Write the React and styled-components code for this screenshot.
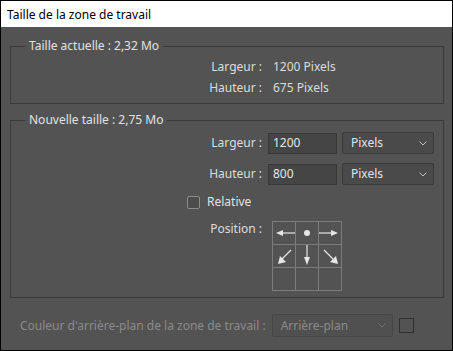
import React from "react";
import styled, { createGlobalStyle } from "styled-components";

const Global = createGlobalStyle`
  html, body { margin: 0; padding: 0; background: #535353; }
  * { box-sizing: border-box; }
`;

const Window = styled.div`
  width: 453px;
  height: 351px;
  border: 1px solid #000;
  background: #535353;
  display: flex;
  flex-direction: column;
  font-family: "Noto Sans", "Open Sans", sans-serif;
  font-size: 12px;
  color: #dadada;
  overflow: hidden;
`;

const TitleBar = styled.div`
  height: 26px;
  flex: none;
  background: #fff;
  color: #000;
  display: flex;
  align-items: center;
  padding-left: 6px;
  font-size: 12px;
`;

const Body = styled.div`
  flex: 1;
  display: flex;
  flex-direction: column;
  padding: 0 8px 0 9px;
`;

const Group = styled.fieldset`
  margin: ${(p) => p.$top}px 0 0;
  padding: 0;
  border: 1px solid #3a3a3a;
  height: ${(p) => p.$h}px;
  min-width: 0;
`;

const Legend = styled.legend`
  margin-left: 14px;
  padding: 0 4px;
  line-height: 16px;
  font-size: 12px;
  color: #e2e2e2;
`;

const InfoGrid = styled.div`
  display: grid;
  grid-template-columns: 251px auto;
  grid-auto-rows: 21px;
  column-gap: 11px;
  align-items: center;
  padding-top: 2px;
`;

const Label = styled.div`
  text-align: right;
  color: ${(p) => (p.$dim ? "#8a8a8a" : "#dcdcdc")};
  line-height: 16px;
  white-space: nowrap;
`;

const Value = styled.div`
  color: #dcdcdc;
  line-height: 16px;
`;

const FormGrid = styled.div`
  display: grid;
  grid-template-columns: 251px auto;
  grid-auto-rows: 22px;
  row-gap: 9px;
  column-gap: 6px;
  align-items: center;
  padding-top: 4px;
`;

const Controls = styled.div`
  display: flex;
  align-items: center;
  gap: 5px;
`;

const Input = styled.div`
  width: 69px;
  height: 21px;
  background: #454545;
  border: 1px solid #383838;
  color: #e6e6e6;
  padding-left: 4px;
  display: flex;
  align-items: center;
  line-height: 16px;
`;

const Select = styled.div`
  width: ${(p) => p.$w}px;
  height: ${(p) => p.$hgt || 22}px;
  margin-left: ${(p) => p.$ml || 0}px;
  background: ${(p) => (p.$disabled ? "#505050" : "#4a4a4a")};
  border: 1px solid ${(p) => (p.$disabled ? "#474747" : "#3a3a3a")};
  border-radius: 2px;
  color: ${(p) => (p.$disabled ? "#8a8a8a" : "#e4e4e4")};
  display: flex;
  align-items: center;
  justify-content: space-between;
  padding: 0 6px 0 8px;
  line-height: 16px;
`;

const Chevron = ({ color }) => (
  <svg width="8" height="5" viewBox="0 0 8 5">
    <path d="M0.5 0.5 L4 4 L7.5 0.5" fill="none" stroke={color} strokeWidth="1" />
  </svg>
);

const CheckRow = styled.div`
  display: flex;
  align-items: center;
  gap: 7px;
  margin: 9px 0 0 176px;
  height: 16px;
`;

const CheckBox = styled.div`
  width: 13px;
  height: 13px;
  border: 1px solid #8c8c8c;
  border-radius: 2px;
  background: #4c4c4c;
`;

const CheckText = styled.span`
  color: #e2e2e2;
  line-height: 16px;
`;

const PositionRow = styled.div`
  display: grid;
  grid-template-columns: 251px auto;
  column-gap: 10px;
  margin-top: 11px;
  align-items: start;
`;

const AnchorGrid = styled.div`
  display: grid;
  grid-template-columns: repeat(3, 22px);
  grid-template-rows: repeat(3, 22px);
  gap: 1px;
  padding: 1px;
  background: #7c7c7c;
  width: 70px;
`;

const Cell = styled.div`
  background: #535353;
  display: flex;
  align-items: center;
  justify-content: center;
`;

const C = "#e6e6e6";

const Arrow = ({ kind }) => {
  const common = { width: 22, height: 22, viewBox: "0 0 22 22" };
  if (kind === "dot")
    return (
      <svg {...common}>
        <circle cx="11" cy="11" r="3" fill={C} />
      </svg>
    );
  if (kind === "left")
    return (
      <svg {...common}>
        <line x1="9" y1="11" x2="22" y2="11" stroke={C} strokeWidth="1.2" />
        <polygon points="3,11 10,8 10,14" fill={C} />
      </svg>
    );
  if (kind === "right")
    return (
      <svg {...common}>
        <line x1="0" y1="11" x2="13" y2="11" stroke={C} strokeWidth="1.2" />
        <polygon points="19,11 12,8 12,14" fill={C} />
      </svg>
    );
  if (kind === "down")
    return (
      <svg {...common}>
        <line x1="11" y1="0" x2="11" y2="13" stroke={C} strokeWidth="1.2" />
        <polygon points="11,20 8,12 14,12" fill={C} />
      </svg>
    );
  if (kind === "downleft")
    return (
      <svg {...common}>
        <line x1="18" y1="5" x2="9" y2="14" stroke={C} strokeWidth="1.2" />
        <polygon points="5,19 7,11 13,17" fill={C} />
      </svg>
    );
  if (kind === "downright")
    return (
      <svg {...common}>
        <line x1="5" y1="5" x2="14" y2="14" stroke={C} strokeWidth="1.2" />
        <polygon points="19,19 11,17 17,11" fill={C} />
      </svg>
    );
  return null;
};

const BottomRow = styled.div`
  display: flex;
  align-items: center;
  margin: 16px 0 0 10px;
  height: 23px;
`;

const Swatch = styled.div`
  width: 15px;
  height: 15px;
  border: 1px solid #303030;
  background: #535353;
  margin-left: 6px;
`;

const cells = ["left", "dot", "right", "downleft", "down", "downright", "", "", ""];

export default function App() {
  return (
    <>
      <Global />
      <Window>
        <TitleBar>Taille de la zone de travail</TitleBar>
        <Body>
          <Group $top={11} $h={66}>
            <Legend>Taille actuelle : 2,32 Mo</Legend>
            <InfoGrid>
              <Label>Largeur :</Label>
              <Value>1200 Pixels</Value>
              <Label>Hauteur :</Label>
              <Value>675 Pixels</Value>
            </InfoGrid>
          </Group>
          <Group $top={8} $h={186}>
            <Legend>Nouvelle taille : 2,75 Mo</Legend>
            <FormGrid>
              <Label>Largeur :</Label>
              <Controls>
                <Input>1200</Input>
                <Select $w={92}>
                  Pixels
                  <Chevron color="#bdbdbd" />
                </Select>
              </Controls>
              <Label>Hauteur :</Label>
              <Controls>
                <Input>800</Input>
                <Select $w={92}>
                  Pixels
                  <Chevron color="#bdbdbd" />
                </Select>
              </Controls>
            </FormGrid>
            <CheckRow>
              <CheckBox />
              <CheckText>Relative</CheckText>
            </CheckRow>
            <PositionRow>
              <Label>Position :</Label>
              <AnchorGrid>
                {cells.map((k, i) => (
                  <Cell key={i}>{k && <Arrow kind={k} />}</Cell>
                ))}
              </AnchorGrid>
            </PositionRow>
          </Group>
          <BottomRow>
            <Label $dim>Couleur d'arrière-plan de la zone de travail :</Label>
            <Select $w={121} $hgt={23} $ml={6} $disabled>
              Arrière-plan
              <Chevron color="#6f6f6f" />
            </Select>
            <Swatch />
          </BottomRow>
        </Body>
      </Window>
    </>
  );
}
